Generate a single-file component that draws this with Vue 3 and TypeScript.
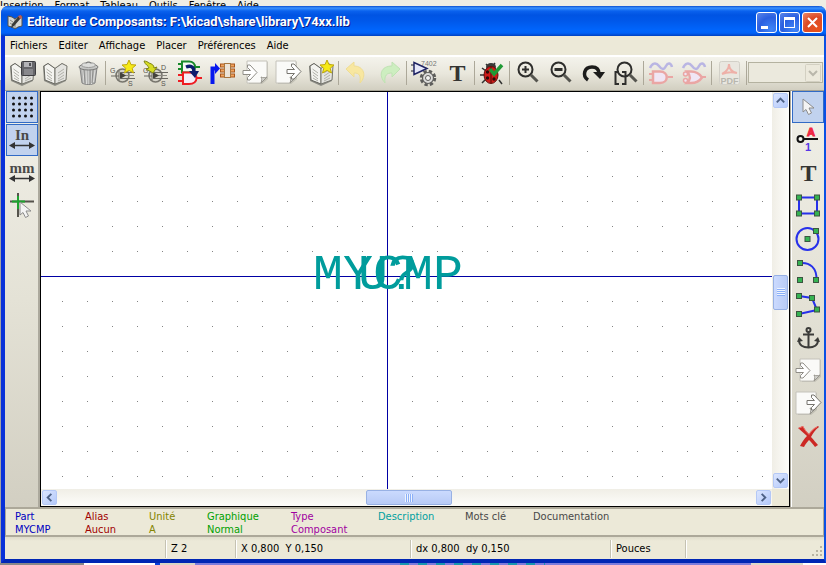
<script setup lang="ts">
import { ref } from 'vue'

interface Tool {
  icon: string
  label: string
  disabled?: boolean
}

const backdropMenus = ['Insertion', 'Format', 'Tableau', 'Outils', 'Fenêtre', 'Aide']
const menus = ['Fichiers', 'Editer', 'Affichage', 'Placer', 'Préférences', 'Aide']

const book =
  '<path d="M1 6l5-3 7 5 7-5 5 3-1 15-11 5L2 21z" fill="#8d8d86"/><path d="M2 6l4-2.500 7 5V24L3 20z" fill="#f4f4f0" stroke="#66665f"/><path d="M25 6l-5-2.500-7 5V24l11-4z" fill="#e4e4e0" stroke="#77776f"/><path d="M4.500 9l5.500 4M4.500 12l5.500 4M5 15l5 4M5 18l5 3M22 9l-6 4M22 12l-6 4M22 15l-6 4M22 18l-6 3" stroke="#b0b0a8" fill="none"/>'
const star =
  '<path d="M19 0l2 4.600 5 .4-3.800 3.300 1.300 4.700-4.500-2.600-4.500 2.600 1.300-4.700L12 5l5-.4z" fill="#f6ea16" stroke="#bfa80c"/>'
const transistor =
  '<circle cx="12.500" cy="15.500" r="6.500" fill="#d6d4ca" stroke="#77756d" stroke-width="1.500"/><path d="M1 16h8M9 11v9M11 12.500h14M11 18.500h14" stroke="#6a6861"/><path d="M11 15.500h13" stroke="#8c8a82"/><path d="M10 12l6 3.500-6 3.500z" fill="#44423c"/><g font-family="Liberation Sans, sans-serif" font-size="7" fill="#55534c"><text x="0" y="13">G</text><text x="18" y="26">S</text></g>'
const sheet =
  '<path d="M2 1h19v17l-6 5H2z" fill="#8d8b83" opacity=".35" transform="translate(1 1)"/><path d="M1 1h20v16l-6 6H1z" fill="#fafaf8" stroke="#c4c2ba"/><path d="M21 17l-6 6c1-3 1-4 0-6 2 1 4 1 6 0z" fill="#d8d8d4" stroke="#96948c"/>'
const arrowRight =
  'M0 9.500h7.500L4.500 6.500V4h2.500l7 7.500-7 7.500H4.500v-2.500l3-3H0z'
const node = (x: number, y: number) =>
  `<rect x="${x - 2.5}" y="${y - 2.5}" width="5" height="5" fill="#35b352" stroke="#3b5540"/>`
const lens = (mark: string) =>
  `<circle cx="11.500" cy="9.500" r="7" fill="none" stroke="#2e2e2c" stroke-width="2"/><path d="M17 15l6.500 6.500" stroke="#55554f" stroke-width="3"/>${mark}`
const letterT =
  '<text x="13.500" y="21" text-anchor="middle" font-family="Liberation Serif, serif" font-weight="700" font-size="24" fill="#343432">T</text>'
const unit = (name: string) =>
  `<text x="13" y="13" text-anchor="middle" font-family="Liberation Serif, serif" font-weight="700" font-size="15" fill="#4a4a48">${name}</text><path d="M3 18.500h21" stroke="#333" stroke-width="1.500"/><path d="M0 18.500l6-3.500v7zM26 18.500l-6-3.500v7z" fill="#333"/>`
const pointer = (x: number, y: number) =>
  `<path transform="translate(${x} ${y})" d="M0 0v13l3-2.500 2.500 5 3-1.500L6 9h5z" fill="#f4f4f4" stroke="#8c8c8c"/>`
const waves =
  '<path d="M2 8c2-5 6-6 9-2s5 4 7 0 5-3 6 1" fill="none" stroke="#b9b5e3" stroke-width="2.500"/>'

const icons: Record<string, string> = {
  save:
    book +
    '<rect x="12.500" y="1.500" width="14" height="14" rx="1" fill="#66666a" stroke="#3d3d40"/><rect x="15" y="2" width="8" height="5" fill="#b4b4b8"/><rect x="20" y="3" width="2" height="3" fill="#505054"/><rect x="15" y="9" width="9" height="6" fill="#88888c"/>',
  book,
  trash:
    '<path d="M5 8h17l-2 15c-3 2-10 2-13 0z" fill="#b4b5b3" stroke="#848484"/><path d="M8 10l1 13M11 10l.5 14M14 10v14M17 10l-.5 14M20 10l-1.500 12" stroke="#dededc"/><path d="M9 10l1 13M15 10v14M18 10l-1 13" stroke="#8d8d8b"/><ellipse cx="13.500" cy="7" rx="9.500" ry="3" fill="#c4c5c3" stroke="#7c7c7a"/><ellipse cx="13.500" cy="5" rx="7" ry="2.500" fill="#dcdddb" stroke="#9b9b99"/><path d="M11 3.500c0-2 5-2 5 0" fill="none" stroke="#6e6e6c"/>',
  newPart: transistor + star,
  loadPart:
    transistor +
    '<text x="18" y="10" font-family="Liberation Sans, sans-serif" font-size="7" fill="#55534c">D</text><path d="M1 1c2 0 4 1 5 2 3 1 5 2 5 5l3-1-4 6-7-4 3-1C6 6 2 5 1 1z" fill="#d6dc22" stroke="#7f8512"/>',
  gates:
    '<path d="M2 4h4M2 9h4M19 7h5" stroke="#17892a" stroke-width="2"/><path d="M6 1.500h7c8 0 8 11 0 11H6z" fill="#f4f8f4" stroke="#17892a" stroke-width="2"/><path d="M2 15h5M2 21h5M21 18h5" stroke="#ee1c22" stroke-width="2"/><path d="M7 12.500h6c10 0 10 11.500 0 11.500H7z" fill="#f4eef8" stroke="#ee1c22" stroke-width="2"/><path d="M10 7c5-2 8 0 8 5" fill="none" stroke="#0b1c6e" stroke-width="3.500"/><path d="M13 11h10l-4 7z" fill="#0b1c6e"/>',
  pins:
    '<path d="M3.500 24V8.500H7" fill="none" stroke="#0718ee" stroke-width="4"/><path d="M6 3l5 5.500L6 14z" fill="#0718ee"/><path d="M11 5.500h15M11 10.500h15M11 15.500h15" stroke="#a8561c" stroke-width="4"/><path d="M12 5.500h13M12 10.500h13M12 15.500h13" stroke="#f0a45e" stroke-width="2"/><rect x="15.500" y="3.500" width="6" height="14" fill="#ece4d8" stroke="#a8763f"/>',
  import:
    `<g transform="translate(4 0)">${sheet}</g><path d="${arrowRight}" transform="translate(1 1)" fill="#fff" stroke="#8f8d86"/>`,
  export: `${sheet}<path d="${arrowRight}" transform="translate(12 0)" fill="#fff" stroke="#77756f"/>`,
  bookStar: book + star,
  undo: '<path d="M3 9l8-7v4c10 0 13 10 6 17 1-8-1-10-6-10v4z" fill="#f8e7a0" stroke="#efdd93"/>',
  redo: '<path d="M24 9l-8-7v4C5 6 2 15 9 23c-1-8 2-10 7-10v4z" fill="#cdeec0" stroke="#bfe2b3"/>',
  gateGear:
    '<text x="10" y="6" font-family="Liberation Sans, sans-serif" font-size="7" fill="#777">7402</text><path d="M0 5h3M0 11h3" stroke="#223"/><path d="M3 2.500v12L16 8.500z" fill="#e6e8fa" stroke="#1f2464" stroke-width="1.500"/><circle cx="17" cy="18" r="6.500" fill="none" stroke="#5d5d5b" stroke-width="3.500" stroke-dasharray="3.100 2"/><circle cx="17" cy="18" r="5.500" fill="#dcdcda" stroke="#5d5d5b" stroke-width="1.200"/><circle cx="17" cy="18" r="2.500" fill="#f4f4f2" stroke="#5d5d5b"/>',
  text: letterT,
  bug:
    '<path d="M3 8l4 3M1 15h5M3 23l4-4M20 20l3 4M7 4l3 3M16 3l-3 4" stroke="#333" stroke-width="1.500"/><ellipse cx="12" cy="7" rx="5" ry="4" fill="#3a3a38"/><ellipse cx="12" cy="15" rx="7" ry="8.500" fill="#cf1a17" stroke="#5f100d"/><path d="M12 7v16" stroke="#4a0b09"/><g fill="#2d0807"><circle cx="8.500" cy="12" r="1.700"/><circle cx="15.500" cy="13" r="1.700"/><circle cx="8.500" cy="18" r="1.700"/><circle cx="15" cy="19" r="1.700"/></g><path d="M11 9l4 5 8-9" fill="none" stroke="#1f9a35" stroke-width="3.500"/>',
  zoomIn: lens('<path d="M8 9.500h7M11.500 6v7" stroke="#2e2e2c" stroke-width="2"/>'),
  zoomOut: lens('<path d="M7.500 9.500h8" stroke="#2e2e2c" stroke-width="3"/>'),
  redraw:
    '<path d="M8 20c-6-4-4-13 4-13 5 0 7 3 7 7" fill="none" stroke="#1c1c1b" stroke-width="3.500"/><path d="M13 12h12l-5 7z" fill="#1c1c1b"/>',
  zoomFit: lens('<path d="M6 12H2.500v12H6M9 12h3.500v12H9" fill="none" stroke="#2e2e2c" stroke-width="2"/>'),
  morganA:
    waves +
    '<path d="M1 14h4M1 20h4M20 17h5" stroke="#eaa6a4" stroke-width="2"/><path d="M5 11.500h7c9 0 9 11.500 0 11.500H5z" fill="#f0e6f4" stroke="#eaa6a4" stroke-width="2.500"/>',
  morganB:
    waves +
    '<path d="M20 17h5" stroke="#eaa6a4" stroke-width="2"/><path d="M6 11.500h4c6 0 9 3 11 6-2 3-5 5.500-11 5.500H6c4-4 4-7 0-11.500z" fill="#f0e6f4" stroke="#eaa6a4" stroke-width="2.500"/><g fill="#f0e6f4" stroke="#eaa6a4" stroke-width="1.500"><circle cx="4.500" cy="14" r="2"/><circle cx="4.500" cy="20.500" r="2"/></g>',
  pdf:
    '<rect x="3.500" y="1.500" width="20" height="23" rx="2" fill="#e9e7e0" stroke="#d2d0c8"/><path d="M6 14c6-3 7-7 7-10 0 5 3 8 8 9-5-1-10-1-15 1z" fill="none" stroke="#eeb0a8" stroke-width="2"/><text x="13.500" y="24" text-anchor="middle" font-family="Liberation Sans, sans-serif" font-size="9" font-weight="700" fill="#b8b6ae">PDF</text>',
  grid: [4, 10, 16, 22]
    .flatMap((y) => [4.5, 10.5, 16.5, 22.5].map((x) => `<circle cx="${x}" cy="${y}" r="1.500" fill="#111"/>`))
    .join(''),
  inches: unit('In'),
  millimetres: unit('mm'),
  cross:
    '<path d="M1 8.500h24M9 0v24" stroke="#55534c" stroke-width="2"/><path d="M3 8.500h13M9 3v13" stroke="#1da32f" stroke-width="2"/>' +
    pointer(11, 9),
  pointer: pointer(8, 5),
  pin:
    '<path d="M8 12h15" stroke="#111" stroke-width="2"/><circle cx="5.500" cy="12" r="3" fill="#f4f4ee" stroke="#111" stroke-width="2"/><text x="16" y="9" text-anchor="middle" font-family="Liberation Sans, sans-serif" font-size="11" font-weight="700" fill="#ee2743" stroke="#ee2743">A</text><text x="13" y="24" text-anchor="middle" font-family="Liberation Sans, sans-serif" font-size="11" font-weight="700" fill="#5637e6">1</text>',
  rect:
    '<rect x="4" y="4.500" width="18" height="16" fill="none" stroke="#2731ea" stroke-width="2"/>' +
    node(4, 4.5) + node(22, 4.5) + node(4, 20.5) + node(22, 20.5),
  circle:
    '<circle cx="12.500" cy="13" r="11" fill="none" stroke="#2731ea" stroke-width="2"/>' + node(12.5, 13) + node(21, 5),
  arc: '<path d="M5 4c10-1 17 5 16.500 17" fill="none" stroke="#2731ea" stroke-width="2"/>' + node(5, 4) + node(5, 21) + node(21, 21),
  poly:
    '<path d="M4 4l13 2 5 12-18 4" fill="none" stroke="#2731ea" stroke-width="2"/>' +
    node(4, 4) + node(17, 6) + node(22, 17.5) + node(4, 22),
  anchor:
    '<g fill="none" stroke="#3c3c3a" stroke-width="2"><circle cx="13.500" cy="5" r="2"/><path d="M13.500 7v15M8 9.500h11M4 15c0 5 4 7.500 9.500 7.500S23 20 23 15" /></g><path d="M2 17l2-5 4 4zM25 17l-2-5-4 4z" fill="#3c3c3a"/>',
  remove:
    '<path d="M3 4l5-2c2 4 4 6 6 8 2-3 5-6 9-8l1 1c-4 3-6 6-8 10 3 3 5 6 7 8l-3 2c-2-3-4-5-6-7-2 2-4 5-5 7l-4-1c2-4 4-7 7-10-3-3-6-5-9-8z" fill="#cc2824"/><path d="M4 4l4-1.500c2 4 4 6 6 8 2-3 4-6 8-7.500" fill="none" stroke="#ee7269"/>',
}

const toolGroups: Tool[][] = [
  [
    { icon: 'save', label: 'Sauver la librairie' },
    { icon: 'book', label: 'Choisir la librairie' },
    { icon: 'trash', label: 'Supprimer un composant' },
  ],
  [
    { icon: 'newPart', label: 'Nouveau composant' },
    { icon: 'loadPart', label: 'Charger un composant' },
    { icon: 'gates', label: 'Mettre à jour le composant' },
    { icon: 'pins', label: 'Table des pins' },
    { icon: 'import', label: 'Importer' },
    { icon: 'export', label: 'Exporter' },
    { icon: 'bookStar', label: 'Nouvelle librairie' },
  ],
  [
    { icon: 'undo', label: 'Annuler', disabled: true },
    { icon: 'redo', label: 'Refaire', disabled: true },
  ],
  [
    { icon: 'gateGear', label: 'Propriétés du composant' },
    { icon: 'text', label: 'Champs' },
  ],
  [{ icon: 'bug', label: 'Tester' }],
  [
    { icon: 'zoomIn', label: 'Zoom +' },
    { icon: 'zoomOut', label: 'Zoom -' },
    { icon: 'redraw', label: 'Redessiner' },
    { icon: 'zoomFit', label: 'Zoom automatique' },
  ],
  [
    { icon: 'morganA', label: 'Représentation normale', disabled: true },
    { icon: 'morganB', label: 'Représentation convertie', disabled: true },
  ],
  [{ icon: 'pdf', label: 'Documentation PDF', disabled: true }],
]

const gridOn = ref(true)
const units = ref<'inches' | 'millimetres'>('inches')
const bigCross = ref(false)

const leftTools: Tool[] = [
  { icon: 'grid', label: 'Grille' },
  { icon: 'inches', label: 'Pouces' },
  { icon: 'millimetres', label: 'Millimètres' },
  { icon: 'cross', label: 'Curseur' },
]

function isOn(icon: string): boolean {
  if (icon === 'grid') return gridOn.value
  if (icon === 'cross') return bigCross.value
  return units.value === icon
}

function toggle(icon: string): void {
  if (icon === 'grid') gridOn.value = !gridOn.value
  else if (icon === 'cross') bigCross.value = !bigCross.value
  else units.value = icon as 'inches' | 'millimetres'
}

const rightTools: Tool[] = [
  { icon: 'pointer', label: 'Sélection' },
  { icon: 'pin', label: 'Pin' },
  { icon: 'text', label: 'Texte' },
  { icon: 'rect', label: 'Rectangle' },
  { icon: 'circle', label: 'Cercle' },
  { icon: 'arc', label: 'Arc' },
  { icon: 'poly', label: 'Polygone' },
  { icon: 'anchor', label: 'Ancre' },
  { icon: 'import', label: 'Importer un dessin' },
  { icon: 'export', label: 'Exporter un dessin' },
  { icon: 'remove', label: 'Supprimer' },
]
const activeTool = ref('pointer')

const scroll = { x: 0.504, y: 0.506 }

const info = [
  { key: 'Part', value: 'MYCMP', tone: 'blue' },
  { key: 'Alias', value: 'Aucun', tone: 'red' },
  { key: 'Unité', value: 'A', tone: 'olive' },
  { key: 'Graphique', value: 'Normal', tone: 'green' },
  { key: 'Type', value: 'Composant', tone: 'purple' },
  { key: 'Description', value: '', tone: 'teal' },
  { key: 'Mots clé', value: '', tone: 'gray' },
  { key: 'Documentation', value: '', tone: 'gray' },
]
const status = ['', 'Z 2', 'X 0,800  Y 0,150', 'dx 0,800  dy 0,150', 'Pouces', '']
</script>

<template>
  <div class="desktop">
    <div class="backdrop-menu">
      <span v-for="m in backdropMenus" :key="m">{{ m }}</span>
    </div>

    <main class="window">
      <header class="titlebar">
        <svg class="app-icon" viewBox="0 0 16 16" aria-hidden="true">
          <path d="M1 2l4 1 3 2 3-2 4-1v10l-4 1-3 2-3-2-4-1z" fill="#d8d8d4" stroke="#50504c" />
          <path d="M8 5v9M3 6l3 2M3 9l3 2" stroke="#86867f" />
          <path d="M12 2l2 2-7 8-3 2 1-4z" fill="#3a3a38" />
          <path d="M11 2l3-1 1 3-2 1z" fill="#c45a50" />
        </svg>
        <h1>Editeur de Composants: F:\kicad\share\library\74xx.lib</h1>
        <div class="window-buttons">
          <button type="button" aria-label="Réduire">
            <svg viewBox="0 0 19 19"><path d="M4 13h7v3H4z" fill="#fff" /></svg>
          </button>
          <button type="button" aria-label="Agrandir">
            <svg viewBox="0 0 19 19"><path d="M4 4h11v11H4zM5 7v7h9V7z" fill="#fff" fill-rule="evenodd" /></svg>
          </button>
          <button type="button" class="close" aria-label="Fermer">
            <svg viewBox="0 0 19 19"><path d="M5 5l9 9M14 5l-9 9" stroke="#fff" stroke-width="2" /></svg>
          </button>
        </div>
      </header>

      <nav class="menubar">
        <button v-for="m in menus" :key="m" type="button">{{ m }}</button>
      </nav>

      <div class="toolbar" role="toolbar">
        <div v-for="(group, i) in toolGroups" :key="i" class="group">
          <button
            v-for="t in group"
            :key="t.icon"
            type="button"
            class="tool"
            :aria-label="t.label"
            :disabled="t.disabled"
          >
            <svg viewBox="0 0 27 27" v-html="icons[t.icon]"></svg>
          </button>
        </div>
        <div class="picker">
          <select aria-label="Unité du composant" disabled></select>
          <svg class="picker-arrow" viewBox="0 0 16 18" aria-hidden="true">
            <rect x=".5" y=".5" width="15" height="17" rx="1" fill="#ece9dc" stroke="#d3d0c2" />
            <path d="M4 7l4 4 4-4" fill="none" stroke="#b9b7ab" stroke-width="2" />
          </svg>
        </div>
      </div>

      <div class="workspace">
        <div class="side left" role="toolbar">
          <button
            v-for="t in leftTools"
            :key="t.icon"
            type="button"
            class="tool"
            :class="{ on: isOn(t.icon) }"
            :aria-label="t.label"
            :aria-pressed="isOn(t.icon)"
            @click="toggle(t.icon)"
          >
            <svg viewBox="0 0 27 27" v-html="icons[t.icon]"></svg>
          </button>
        </div>

        <div class="frame">
          <svg class="canvas">
            <defs>
              <pattern id="dots" width="25" height="25" patternUnits="userSpaceOnUse">
                <rect x="21" y="9" width="1" height="1" fill="#848484" />
              </pattern>
            </defs>
            <rect v-if="gridOn" width="100%" height="100%" fill="url(#dots)" />
            <rect y="184" width="100%" height="1" fill="#0000a4" />
            <rect x="346" width="1" height="100%" fill="#0000a4" />
            <text class="field" x="347" y="197">MYCMP</text>
            <text class="field" x="347" y="197">U?</text>
          </svg>
          <div class="scrollbar vertical">
            <button type="button" class="step" aria-label="Haut">
              <svg viewBox="0 0 14 14"><path d="M3 9l4-4 4 4" /></svg>
            </button>
            <span :style="{ flexGrow: scroll.y }"></span>
            <div class="thumb"><i></i></div>
            <span :style="{ flexGrow: 1 - scroll.y }"></span>
            <button type="button" class="step" aria-label="Bas">
              <svg viewBox="0 0 14 14"><path d="M3 5l4 4 4-4" /></svg>
            </button>
          </div>
          <div class="scrollbar horizontal">
            <button type="button" class="step" aria-label="Gauche">
              <svg viewBox="0 0 14 14"><path d="M9 3L5 7l4 4" /></svg>
            </button>
            <span :style="{ flexGrow: scroll.x }"></span>
            <div class="thumb"><i></i></div>
            <span :style="{ flexGrow: 1 - scroll.x }"></span>
            <button type="button" class="step" aria-label="Droite">
              <svg viewBox="0 0 14 14"><path d="M5 3l4 4-4 4" /></svg>
            </button>
          </div>
          <div class="corner"></div>
        </div>

        <div class="side right" role="toolbar">
          <button
            v-for="t in rightTools"
            :key="t.icon"
            type="button"
            class="tool"
            :class="{ on: activeTool === t.icon }"
            :aria-label="t.label"
            :aria-pressed="activeTool === t.icon"
            @click="activeTool = t.icon"
          >
            <svg viewBox="0 0 27 27" v-html="icons[t.icon]"></svg>
          </button>
        </div>
      </div>

      <dl class="info">
        <div v-for="f in info" :key="f.key" :class="f.tone">
          <dt>{{ f.key }}</dt>
          <dd>{{ f.value }}</dd>
        </div>
      </dl>

      <footer class="status">
        <span v-for="(s, i) in status" :key="i">{{ s }}</span>
        <svg class="grip" viewBox="0 0 12 12" aria-hidden="true">
          <path d="M8 0h2v2H8zM4 4h2v2H4zM8 4h2v2H8zM0 8h2v2H0zM4 8h2v2H4zM8 8h2v2H8z" fill="#b8b4a2" />
        </svg>
      </footer>
    </main>

    <div class="backdrop-bottom"><i></i><i></i><i></i><i></i><i></i><i></i><i></i></div>
  </div>
</template>

<style>
body {
  margin: 0;
  background: #9a9a9c;
}
</style>

<style scoped>
* {
  box-sizing: border-box;
}
.desktop {
  display: flex;
  flex-direction: column;
  min-height: 100vh;
  font: 11px/13px Tahoma, 'DejaVu Sans Condensed', 'DejaVu Sans', sans-serif;
  color: #000;
  background: linear-gradient(#efeee4 0 80px, #a2a2a4 80px);
}
.desktop button {
  padding: 0;
  border: 0;
  background: none;
  font: inherit;
  color: inherit;
}
.desktop svg {
  display: block;
}
.backdrop-menu {
  display: flex;
  gap: 11px;
  height: 6px;
  overflow: hidden;
  line-height: 12px;
  background: #efeee4;
}
.window {
  flex: 1;
  display: flex;
  flex-direction: column;
  margin-left: 1px;
  border: solid #0831d9;
  border-width: 0 2px 4px 4px;
  border-color: #0a50e4 #0a50e4 #0026b4 #0831d9;
  border-radius: 7px 7px 0 0;
  background: #ece9d8;
}
.titlebar {
  display: flex;
  align-items: center;
  gap: 4px;
  height: 30px;
  margin: 0 -2px 0 -4px;
  padding: 2px 3px 0 6px;
  border-radius: 7px 7px 0 0;
  background: linear-gradient(#0a4fd0 0, #3b93ff 2px, #0a62ee 5px, #0054e3 9px, #0058ea 15px, #0065fc 24px, #0062f8 27px, #0040c0 30px);
}
.app-icon {
  width: 16px;
  height: 16px;
}
.titlebar h1 {
  flex: 1;
  margin: 0;
  font: 700 13px/16px 'Trebuchet MS', Roboto, 'Noto Sans', sans-serif;
  color: #fff;
  text-shadow: 1px 1px #0a1883;
  white-space: nowrap;
}
.window-buttons {
  display: flex;
  gap: 2px;
}
.window-buttons button {
  width: 21px;
  height: 21px;
  border: 1px solid #fff;
  border-radius: 3px;
  background: radial-gradient(circle at 75% 85%, #3f86f8, #2a5fe0 55%, #5c86ea);
}
.window-buttons .close {
  background: radial-gradient(circle at 75% 85%, #e8521c, #dc4a26 55%, #ea8a6c);
}
.menubar {
  display: flex;
  gap: 11px;
  height: 21px;
  padding-left: 5px;
  border-bottom: 2px solid #fff;
}
.toolbar {
  display: flex;
  height: 34px;
  padding-left: 1px;
  border-bottom: 1px solid #a5a294;
  background: linear-gradient(#f4f3ec, #e9e7dc 50%, #d2cfc1);
}
.group {
  display: flex;
}
.group::after {
  content: '';
  width: 1px;
  height: 24px;
  margin-top: 4px;
  border-left: 1px solid #aca899;
}
.tool {
  width: 33px;
  height: 33px;
}
.desktop .tool svg {
  width: 27px;
  height: 27px;
  margin: 0 auto;
}
.picker {
  flex: 1;
  display: grid;
  align-items: center;
  margin: 5px 1px 7px 0;
}
.picker select {
  grid-area: 1 / 1;
  width: 100%;
  height: 21px;
  border: 1px solid #b4b2a0;
  border-radius: 0;
  background: #ebe9dd;
  appearance: none;
  opacity: 1;
}
.picker-arrow {
  grid-area: 1 / 1;
  justify-self: end;
  width: 16px;
  height: 18px;
  margin-right: 2px;
  z-index: 1;
}
.workspace {
  flex: 1;
  display: flex;
  background: #aca99d;
}
.side {
  display: flex;
  flex-direction: column;
  background: linear-gradient(#f1f0e8, #e4e2d6 50%, #d2cfc2);
}
.left {
  width: 33px;
  margin-right: 2px;
  padding-left: 1px;
}
.right {
  width: 33px;
  margin-left: 1px;
  border-left: 1px solid #fff;
}
.side .tool {
  width: 32px;
  height: 32px;
  margin-bottom: 1px;
}
.side .tool.on {
  border: 1px solid #316ac5;
  background: #c1d2ee;
}
.frame {
  flex: 1;
  display: grid;
  grid-template-columns: 1fr 17px;
  grid-template-rows: 1fr 17px;
  min-width: 0;
  border: 1px solid #000;
  background: #fff;
}
.canvas {
  width: 100%;
  height: 100%;
  min-height: 0;
}
.field {
  font: 50px 'Liberation Mono', monospace;
  fill: #009c9c;
  text-anchor: middle;
}
.scrollbar {
  display: flex;
  background: linear-gradient(90deg, #f0eee6, #fdfdfa);
}
.vertical {
  flex-direction: column;
  padding: 1px;
}
.horizontal {
  padding: 1px;
  background: linear-gradient(#f0eee6, #fdfdfa);
}
.corner {
  background: #ece9d8;
}
.desktop .step {
  width: 15px;
  height: 15px;
  border: 1px solid #b4c8f6;
  border-radius: 2px;
  background: linear-gradient(135deg, #dbe5fe, #b4c9fa);
}
.step path {
  fill: none;
  stroke: #4d6185;
  stroke-width: 2;
}
.thumb {
  display: grid;
  place-items: center;
  border: 1px solid #98b1e4;
  border-radius: 2px;
  background: linear-gradient(#cbdafe, #b8cbf6);
}
.vertical .thumb {
  height: 35px;
  background: linear-gradient(90deg, #cbdafe, #b8cbf6);
}
.horizontal .thumb {
  width: 86px;
}
.thumb i {
  width: 8px;
  height: 8px;
  background: repeating-linear-gradient(90deg, #eef4fe 0 1px, #8cb0f8 1px 2px);
}
.vertical .thumb i {
  background: repeating-linear-gradient(#eef4fe 0 1px, #8cb0f8 1px 2px);
}
.info {
  display: grid;
  grid-template-columns: 70px 64px 58px 84px 87px 87px 68px 1fr;
  height: 30px;
  margin: 0;
  padding: 1px 0 0 9px;
  border: solid #aca899;
  border-width: 2px 1px 2px 1px;
}
.info dd {
  margin: 0;
}
.blue { color: #0000c0; }
.red { color: #a00000; }
.olive { color: #848400; }
.green { color: #00a000; }
.purple { color: #a000a0; }
.teal { color: #00a0a0; }
.gray { color: #484848; }
.status {
  display: grid;
  grid-template-columns: 160px 70px 175px 200px 75px 1fr 12px;
  height: 22px;
  line-height: 18px;
  padding: 3px 0 1px 1px;
  background: linear-gradient(#dfdccb, #ece9d8 4px);
}
.status span {
  padding-left: 4px;
  border-left: 1px solid #fff;
  box-shadow: -1px 0 #c5c2b2;
  white-space: pre;
}
.status span:first-child {
  border: 0;
  box-shadow: none;
}
.grip {
  align-self: end;
  width: 12px;
  height: 12px;
}
.backdrop-bottom {
  display: grid;
  grid-template-columns: 84px 71px 5px 35px 1fr 52px 23px;
  height: 2px;
  background: #88888a;
}
.backdrop-bottom i:nth-child(2) { background: #fff; }
.backdrop-bottom i:nth-child(3) { background: #0a3fd8; }
.backdrop-bottom i:nth-child(4) { background: #d8d5c6; }
.backdrop-bottom i:nth-child(5) {
  background: repeating-linear-gradient(90deg, #1898b0 0 9px, #7c7cdc 9px 18px) 205px 0 / 145px 2px no-repeat #7c7cdc;
}
.backdrop-bottom i:nth-child(6) { background: #dcd9ca; }
.backdrop-bottom i:nth-child(7) { background: #fff; }
</style>
